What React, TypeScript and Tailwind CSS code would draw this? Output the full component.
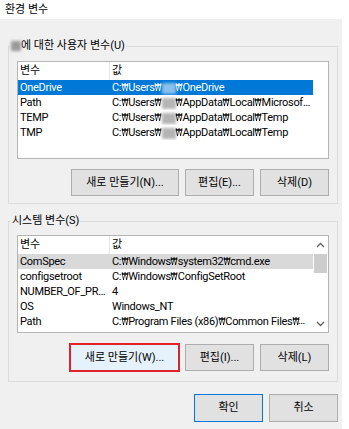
import React from 'react'

type Row = {
  name: string
  value: React.ReactNode
  selected?: boolean
  inactive?: boolean
}

// Korean Windows shows the backslash as a narrow won sign
const P = ({ text }: { text: string }) => (
  <>
    {text.split('₩').map((part, i) => (
      <React.Fragment key={i}>
        {i > 0 && (
          <span className="inline-block -mx-[1.5px] scale-x-[0.72] font-['DejaVu_Sans'] text-[10px] tracking-normal">₩</span>
        )}
        {part}
      </React.Fragment>
    ))}
  </>
)

const Blur = ({ light = false }: { light?: boolean }) => (
  <span
    className={`inline-block w-[14px] h-[11px] align-middle blur-[1.5px] ${
      light ? 'bg-[#8cc0ec]' : 'bg-[#b4b4b4]'
    }`}
  />
)

const userValue = (rest: string, light = false) => (
  <>
    <P text="C:₩Users₩" />
    <Blur light={light} />
    <P text={'₩' + rest} />
  </>
)

const Chevron = ({ up }: { up?: boolean }) => (
  <svg width="9" height="6" viewBox="0 0 9 6">
    <polyline
      points={up ? '1,5 4.5,1.5 8,5' : '1,1 4.5,4.5 8,1'}
      fill="none"
      stroke="#606060"
      strokeWidth="1.3"
    />
  </svg>
)

const ListView = ({ rows, scroll = false }: { rows: Row[]; scroll?: boolean }) => (
  <div className="h-[98px] border border-[#b4b4b4] bg-white flex overflow-hidden">
    <div className="w-[295px] flex flex-col">
      <div className="h-[18px] shrink-0 flex items-center">
        <div className="w-[92px] pl-[2px] border-r border-[#e5e5e5] h-full flex items-center">변수</div>
        <div className="pl-[2px]">값</div>
      </div>
      {rows.map((r) => (
        <div
          key={r.name}
          className={`h-[15px] shrink-0 flex items-center whitespace-nowrap leading-[15px] tracking-[-0.3px] ${
            r.selected ? 'bg-[#0078d7] text-white' : r.inactive ? 'bg-[#d9d9d9]' : ''
          }`}
        >
          <div className="w-[92px] pl-[2px] pr-[2px] truncate">{r.name}</div>
          <div className="flex-1 min-w-0 pl-[2px] pr-[2px] truncate">{r.value}</div>
        </div>
      ))}
    </div>
    <div className="flex-1 flex flex-col">
      {scroll && (
        <>
          <div className="h-[18px] flex items-center justify-center">
            <Chevron up />
          </div>
          <div className="h-[19px] mx-[1px] bg-[#cdcdcd]" />
          <div className="flex-1" />
          <div className="h-[16px] flex items-center justify-center">
            <Chevron />
          </div>
        </>
      )}
    </div>
  </div>
)

const Btn = ({
  children,
  className = '',
}: {
  children: React.ReactNode
  className?: string
}) => (
  <div className={`h-[27px] flex items-center justify-center border ${className}`}>
    {children}
  </div>
)

const userRows: Row[] = [
  { name: 'OneDrive', value: userValue('OneDrive', true), selected: true },
  { name: 'Path', value: userValue('AppData₩Local₩Microsoft₩WindowsApps') },
  { name: 'TEMP', value: userValue('AppData₩Local₩Temp') },
  { name: 'TMP', value: userValue('AppData₩Local₩Temp') },
]

const sysRows: Row[] = [
  { name: 'ComSpec', value: <P text="C:₩Windows₩system32₩cmd.exe" />, inactive: true },
  { name: 'configsetroot', value: <P text="C:₩Windows₩ConfigSetRoot" /> },
  { name: 'NUMBER_OF_PROCESSORS', value: '4' },
  { name: 'OS', value: 'Windows_NT' },
  { name: 'Path', value: <P text="C:₩Program Files (x86)₩Common Files₩Oracle₩Java₩javapath" /> },
  { name: 'PATHEXT', value: '.COM;.EXE;.BAT;.CMD;.VBS;.VBE;.JS;.JSE;.WSF;.WSH;.MSC' },
]

export default function App() {
  return (
    <div className="w-[349px] h-[429px] bg-white flex flex-col overflow-hidden text-[11px] leading-[14px] text-black font-['Roboto','Noto_Sans_CJK_KR',sans-serif]">
      <div className="h-[19px] shrink-0 pl-[5px] flex items-center">환경 변수</div>
      <div className="w-[342px] flex-1 bg-[#f0f0f0] px-[8px] pt-[27px] flex flex-col">
        {/* user variables */}
        <div className="relative w-[330px] border border-[#dcdcdc] px-[8px] pt-[14px] pb-[7px]">
          <div className="absolute -top-[8px] left-[1px] px-[1px] bg-[#f0f0f0] flex items-center">
            <span className="inline-block w-[10px] h-[10px] bg-[#9a9a9a] blur-[1.5px]" />
            에 대한 사용자 변수(U)
          </div>
          <ListView rows={userRows} />
          <div className="mt-[10px] flex justify-end gap-[6px]">
            <Btn className="w-[108px] border-[#adadad] bg-[#e1e1e1]">새로 만들기(N)...</Btn>
            <Btn className="w-[69px] border-[#adadad] bg-[#e1e1e1]">편집(E)...</Btn>
            <Btn className="w-[69px] border-[#adadad] bg-[#e1e1e1]">삭제(D)</Btn>
          </div>
        </div>

        {/* system variables */}
        <div className="relative mt-[17px] w-[330px] border border-[#dcdcdc] px-[8px] pt-[13px] pb-[10px]">
          <div className="absolute -top-[8px] left-[2px] px-[1px] bg-[#f0f0f0]">시스템 변수(S)</div>
          <ListView rows={sysRows} scroll />
          <div className="mt-[11px] flex justify-end gap-[6px]">
            <Btn className="w-[109px] border-[#e5f1fb] bg-[#e5f1fb] outline-2 outline-[#e0232b] outline-offset-[-1px]">
              새로 만들기(W)...
            </Btn>
            <Btn className="w-[69px] border-[#adadad] bg-[#e1e1e1]">편집(I)...</Btn>
            <Btn className="w-[69px] border-[#adadad] bg-[#e1e1e1]">삭제(L)</Btn>
          </div>
        </div>

        <div className="mt-[12px] w-[330px] flex justify-end gap-[6px]">
          <Btn className="w-[69px] h-[28px] border-[#0078d7] bg-[#e1e1e1]">확인</Btn>
          <Btn className="w-[69px] h-[28px] border-[#adadad] bg-[#e1e1e1]">취소</Btn>
        </div>
      </div>
    </div>
  )
}
